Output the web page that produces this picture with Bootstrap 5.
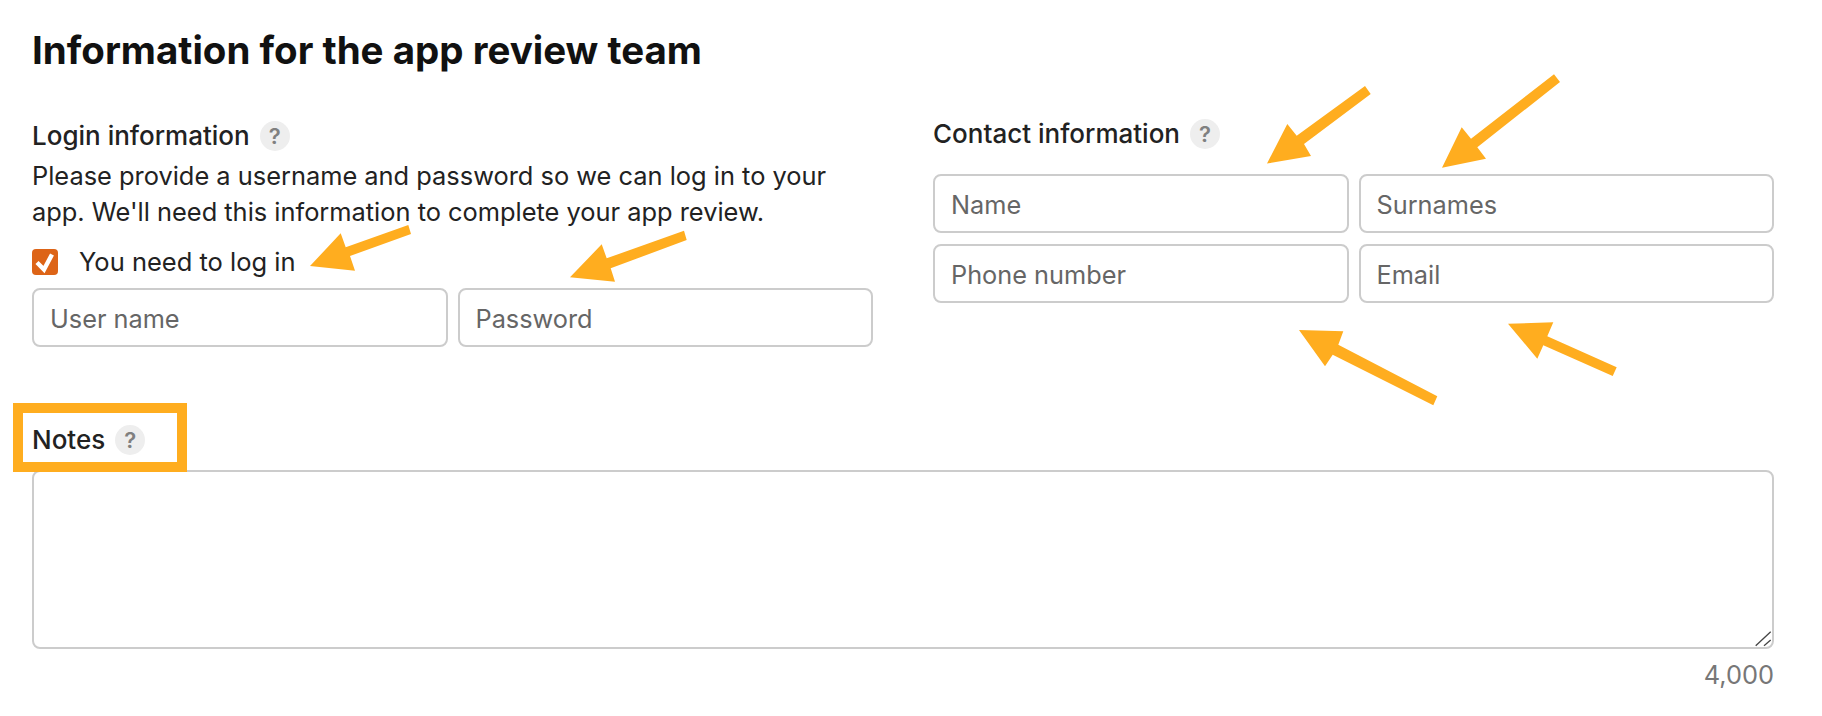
<!DOCTYPE html>
<html lang="en"><head><meta charset="utf-8"><title>Information for the app review team</title>
<link rel="stylesheet" href="https://cdn.jsdelivr.net/npm/bootstrap@5.3.0/dist/css/bootstrap.min.css">
<style>
body{font-family:Inter,"Liberation Sans",sans-serif;color:#222;background:#fff;height:716px;overflow:hidden}
.pagewrap{padding:27px 48px 0 32px;position:relative;height:716px}
.ttl{font-size:38.5px;font-weight:700;line-height:46px;color:#111;margin:0 0 43px}
.lbl{font-size:26px;font-weight:450;line-height:36px;display:flex;align-items:center;gap:10px;margin:0}
.qm{width:30px;height:30px;border-radius:50%;background:#eee;color:#808080;font-size:22px;font-weight:600;display:inline-flex;align-items:center;justify-content:center}
.desc{font-size:25.4px;line-height:36px;margin:4px 0 0;max-width:810px}
.fld.form-control{height:59px;border:2px solid #ccc;border-radius:8px;font-size:25.3px;padding:2px 16px 0;color:#222}
.fld::placeholder{color:#666;opacity:1}
.colgap{gap:10px}
.leftcol{width:841px;padding-top:2px}
.rightcol{width:841px;margin-left:60px}
.ck.form-check-input:checked[type=checkbox]{width:26px;height:26px;margin:0;border:0;border-radius:4px;background-color:#dd6417;opacity:1;--bs-form-check-bg-image:url("data:image/svg+xml,%3csvg xmlns='http://www.w3.org/2000/svg' viewBox='0 0 26 26'%3e%3cpath fill='none' stroke='%23fff' stroke-width='4.4' d='M5 13.5l7 7 8-15'/%3e%3c/svg%3e");background-size:26px 26px}
.cklabel{font-size:25.5px;line-height:36px;margin-left:21px}
.ckrow{margin:14px 0 8px}
.contactlbl{margin-bottom:22px}
.rowgap{margin-bottom:11px}
.notelbl{margin:75px 0 12px}
.area.form-control{height:179px;border:2px solid #ccc;border-radius:8px;resize:none}
.cnt{font-size:25.4px;color:#777;text-align:right;line-height:36px;margin-top:8px}
.notebox{position:absolute;left:13px;top:403px;width:174px;height:69px;border:10px solid #ffad1f;pointer-events:none}
.arrows{position:absolute;left:0;top:0;pointer-events:none}
.arrows polygon{fill:#ffad1f}
.arrows line{stroke:#444;stroke-width:1.3}
</style></head><body>
<div class="pagewrap">
<h1 class="ttl">Information for the app review team</h1>
<div class="d-flex">
 <div class="leftcol">
  <p class="lbl">Login information <span class="qm">?</span></p>
  <p class="desc">Please provide a username and password so we can log in to your app. We'll need this information to complete your app review.</p>
  <div class="d-flex align-items-center ckrow"><input class="form-check-input ck" type="checkbox" checked id="c1"><label class="cklabel" for="c1">You need to log in</label></div>
  <div class="d-flex colgap"><input class="form-control fld" placeholder="User name"><input class="form-control fld" placeholder="Password"></div>
 </div>
 <div class="rightcol">
  <p class="lbl contactlbl">Contact information <span class="qm">?</span></p>
  <div class="d-flex colgap rowgap"><input class="form-control fld" placeholder="Name"><input class="form-control fld" placeholder="Surnames"></div>
  <div class="d-flex colgap"><input class="form-control fld" placeholder="Phone number"><input class="form-control fld" placeholder="Email"></div>
 </div>
</div>
<p class="lbl notelbl">Notes <span class="qm">?</span></p>
<textarea class="form-control area"></textarea>
<div class="cnt">4,000</div>
<div class="notebox"></div>
<svg class="arrows" width="1822" height="716" viewBox="0 0 1822 716" aria-hidden="true">
<polygon points="408.3,225 411,234 350,256 355,270.7 310,266 340.7,233.3 345.7,247.3"/>
<polygon points="684,230.7 686.7,240 610.7,268.3 615,281.7 570,277.3 601.7,244.3 606.7,258.3"/>
<polygon points="1365,86 1370.7,94 1304,144 1311,156 1267,163.5 1287.3,124 1296.7,135.7"/>
<polygon points="1554,74.3 1560,82 1477.3,147.3 1486,158.7 1442,167.7 1461.7,127.3 1471,138.7"/>
<polygon points="1437.3,396.3 1433.3,405.3 1332.7,354.7 1325,366.3 1299,330 1343.3,331.3 1338.3,344.7"/>
<polygon points="1616.7,367.3 1612.7,376 1543.3,345.3 1537.3,358.7 1508,323.7 1553.3,322.3 1547.3,336.3"/>
<line x1="1755.7" y1="645.7" x2="1770.7" y2="631.7"/>
<line x1="1764" y1="645.7" x2="1770.7" y2="640"/>
</svg>
</div>
</body></html>
